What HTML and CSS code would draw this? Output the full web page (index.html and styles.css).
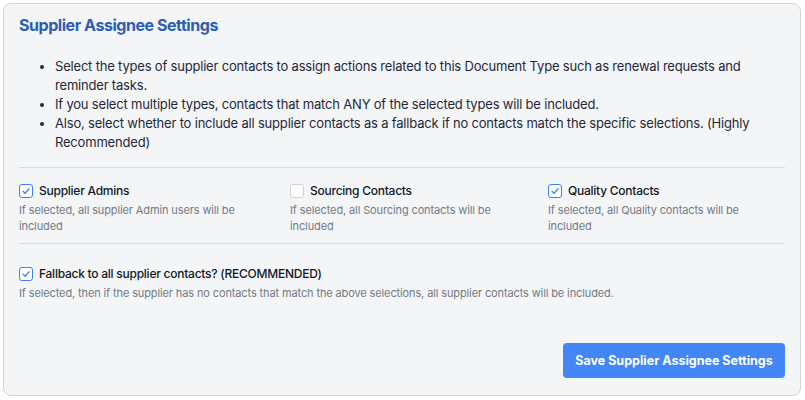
FILE: index.html
```html
<!DOCTYPE html>
<html>
<head>
<meta charset="utf-8">
<link rel="stylesheet" href="styles.css">
</head>
<body>
<div class="card">
  <h2 class="title">Supplier Assignee Settings</h2>
  <ul class="info">
    <li>Select the types of supplier contacts to assign actions related to this Document Type such as renewal requests and reminder tasks.</li>
    <li>If you select multiple types, contacts that match ANY of the selected types will be included.</li>
    <li>Also, select whether to include all supplier contacts as a fallback if no contacts match the specific selections. (Highly Recommended)</li>
  </ul>
  <div class="options">
    <div class="option">
      <label class="check-label"><span class="box checked"><svg viewBox="0 0 14 14"><path d="M3.5 7.2 L6 9.6 L10.6 4.4"/></svg></span>Supplier Admins</label>
      <p class="desc">If selected, all supplier Admin users will be included</p>
    </div>
    <div class="option">
      <label class="check-label"><span class="box"></span>Sourcing Contacts</label>
      <p class="desc">If selected, all Sourcing contacts will be included</p>
    </div>
    <div class="option">
      <label class="check-label"><span class="box checked"><svg viewBox="0 0 14 14"><path d="M3.5 7.2 L6 9.6 L10.6 4.4"/></svg></span>Quality Contacts</label>
      <p class="desc">If selected, all Quality contacts will be included</p>
    </div>
  </div>
  <div class="fallback">
    <label class="check-label"><span class="box checked"><svg viewBox="0 0 14 14"><path d="M3.5 7.2 L6 9.6 L10.6 4.4"/></svg></span>Fallback to all supplier contacts? (RECOMMENDED)</label>
    <p class="desc">If selected, then if the supplier has no contacts that match the above selections, all supplier contacts will be included.</p>
  </div>
  <div class="actions">
    <button class="save">Save Supplier Assignee Settings</button>
  </div>
</div>
</body>
</html>
```
FILE: styles.css
```css
* { box-sizing: border-box; }
html, body { margin: 0; background: #ffffff; }
body {
  padding: 3px 4px 4px 3px;
  font-family: Inter, "Noto Sans", sans-serif;
  color: #1f2937;
}
.card {
  width: 798px;
  height: 393px;
  background: #f4f5f7;
  border: 1px solid #d1d5db;
  border-radius: 8px;
  padding: 10px 15px 17px 15px;
  display: flex;
  flex-direction: column;
}
.title {
  margin: 0;
  font-size: 16px;
  line-height: 22px;
  font-weight: 650;
  letter-spacing: -0.45px;
  color: #2b5eb3;
}
.info {
  margin: 21px 0 0 0;
  padding: 0 0 0 36px;
  font-size: 13px;
  line-height: 19px;
  letter-spacing: -0.19px;
  color: #1f2937;
}
.info li { margin: 0; }
.options {
  margin-top: 15px;
  border-top: 1px solid #d9dce1;
  border-bottom: 1px solid #d9dce1;
  display: grid;
  grid-template-columns: 271px 258px 1fr;
  padding: 14px 0 9px 0;
}
.check-label {
  display: flex;
  align-items: center;
  gap: 6px;
  font-size: 12px;
  line-height: 18px;
  font-weight: 500;
  letter-spacing: -0.25px;
  color: #111827;
}
.box {
  width: 14px;
  height: 14px;
  border: 1px solid #cdd1d7;
  border-radius: 3px;
  background: #ffffff;
  flex: none;
  display: flex;
}
.box.checked { border-color: #3b82f6; }
.box svg { width: 12px; height: 12px; }
.box path {
  fill: none;
  stroke: #3b82f6;
  stroke-width: 1.5;
  stroke-linecap: round;
  stroke-linejoin: round;
}
.desc {
  margin: 2px 0 0 0;
  font-size: 11px;
  line-height: 16px;
  letter-spacing: -0.12px;
  color: #737a86;
}
.option .desc { padding-right: 20px; }
.fallback { padding-top: 21px; }
.actions {
  margin-top: auto;
  display: flex;
  justify-content: flex-end;
}
.save {
  background: #4287f5;
  color: #ffffff;
  border: none;
  border-radius: 4px;
  font-family: Inter, "Noto Sans", sans-serif;
  font-weight: 700;
  font-size: 12.5px;
  height: 35px;
  padding: 0 12px;
  width: 222px;
}
```
